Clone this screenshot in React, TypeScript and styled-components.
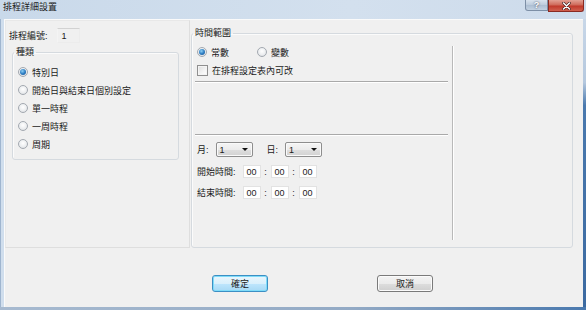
import React from "react";
import styled, { createGlobalStyle } from "styled-components";

const Global = createGlobalStyle`
  html, body { margin: 0; padding: 0; background: #f0f0f0; }
  body {
    font-family: "Liberation Sans", "Noto Sans CJK TC", sans-serif;
    font-size: 9px;
    color: #1b1b1b;
  }
  * { box-sizing: border-box; }
`;

const Window = styled.div`
  width: 586px;
  height: 310px;
  display: flex;
  flex-direction: column;
  background: #c9d8ea;
  overflow: hidden;
`;

const TitleBar = styled.div`
  height: 19px;
  flex: none;
  display: flex;
  align-items: flex-start;
  padding-left: 3px;
  background: linear-gradient(90deg, #c9d9ea 0%, #d3e0ee 60%, #cddbeb 100%);
`;

const TitleText = styled.div`
  flex: 1;
  padding-top: 2px;
  line-height: 11px;
  font-size: 9px;
  color: #202020;
`;

const CaptionButtons = styled.div`
  display: flex;
  margin-right: 2px;
`;

const CaptionButton = styled.div<{ $kind: "help" | "close" }>`
  width: ${(p) => (p.$kind === "close" ? 36 : 23)}px;
  height: ${(p) => (p.$kind === "close" ? 12 : 11)}px;
  display: flex;
  align-items: center;
  justify-content: center;
  border: 1px solid ${(p) => (p.$kind === "close" ? "#8a2a22" : "#7d8fa6")};
  border-top: none;
  border-radius: ${(p) => (p.$kind === "close" ? "0 0 3px 0" : "0 0 0 3px")};
  background: ${(p) =>
    p.$kind === "close"
      ? "linear-gradient(180deg, #e2a093 0%, #cf6a5a 45%, #c0392b 55%, #d0604f 100%)"
      : "linear-gradient(180deg, #d9e3ee 0%, #bccbdc 50%, #aebfd3 55%, #c3d2e2 100%)"};
  color: #fff;
  font-weight: bold;
  font-size: 9px;
  line-height: 9px;
  text-shadow: 0 0 2px #334;
`;

const Frame = styled.div`
  flex: 1;
  display: flex;
  min-height: 0;
`;

const LeftEdge = styled.div`
  width: 4px;
  flex: none;
  background: linear-gradient(90deg, #9fb5cf 0 1px, #d0deed 1px);
`;

const RightEdge = styled.div`
  width: 3px;
  flex: none;
  background: linear-gradient(180deg, #c8d7e8 0%, #b5c8de 22%, #4a79ae 30%, #3c6aa1 100%);
`;

const BottomEdge = styled.div`
  height: 3px;
  flex: none;
  background: linear-gradient(90deg, #a7bad0 0%, #93aac5 60%, #4a79ae 100%);
`;

const Client = styled.div`
  flex: 1;
  display: flex;
  flex-direction: column;
  background: #f0f0f0;
  border-top: 1px solid #fafafa;
  border-left: 1px solid #fafafa;
`;

const Main = styled.div`
  display: flex;
  height: 228px;
  align-items: stretch;
`;

const LeftPanel = styled.div`
  width: 185px;
  flex: none;
  display: flex;
  flex-direction: column;
  padding: 7px 0 0 3px;
  border: 1px solid #dedede;
  border-top-color: #e8e8e8;
  border-left-color: #e8e8e8;
`;

const Row = styled.div<{ $h: number; $mt?: number }>`
  display: flex;
  align-items: center;
  height: ${(p) => p.$h}px;
  margin-top: ${(p) => p.$mt ?? 0}px;
  white-space: nowrap;
`;

const IdLabel = styled.span`
  margin-right: 9px;
`;

const IdField = styled.div`
  width: 23px;
  height: 15px;
  padding-left: 4px;
  display: flex;
  align-items: center;
  border: 1px solid #ececec;
  border-top-color: #d2d2d2;
  border-left-color: #f4f4f4;
`;

const Group = styled.fieldset<{ $w: number }>`
  width: ${(p) => p.$w}px;
  margin: 0;
  min-width: 0;
  border: 1px solid #d5dadf;
  border-radius: 3px;
  box-shadow: inset 1px 1px 0 #fbfbfb;
`;

const KindGroup = styled(Group)`
  margin: 3px 0 0 3px;
  padding: 5px 4px 6px 5px;
  display: flex;
  flex-direction: column;
`;

const Legend = styled.legend<{ $ml: number }>`
  padding: 0 2px;
  margin-left: ${(p) => p.$ml}px;
  line-height: 12px;
  font-size: 9px;
`;

const TimeGroup = styled(Group)`
  margin: 7px 0 0 1px;
  padding: 6px 0 6px 3px;
  display: flex;
  align-items: stretch;
`;

const Option = styled.label<{ $ml?: number }>`
  display: flex;
  align-items: center;
  gap: 4px;
  margin-left: ${(p) => p.$ml ?? 0}px;
`;

const Radio = styled.span<{ $on?: boolean }>`
  width: 10px;
  height: 10px;
  flex: none;
  border-radius: 50%;
  border: 1px solid #a3a9b0;
  background: radial-gradient(circle at 50% 40%, #ffffff 0%, #eceef0 55%, #d6d9dc 100%);
  display: flex;
  align-items: center;
  justify-content: center;
  &::after {
    content: "";
    display: ${(p) => (p.$on ? "block" : "none")};
    width: 6px;
    height: 6px;
    border-radius: 50%;
    background: radial-gradient(circle at 40% 35%, #8fd0f5 0%, #2f7fc4 50%, #184f8e 100%);
  }
`;

const KindRow = styled(Row)`
  height: 18px;
`;

const CheckBox = styled.span`
  width: 11px;
  height: 11px;
  flex: none;
  border: 1px solid #8f8f8f;
  background: linear-gradient(135deg, #dcdcdc 0%, #f4f4f4 60%, #ffffff 100%);
  box-shadow: inset 0 0 0 1px #f4f4f4;
`;

const TimeColumn = styled.div`
  width: 253px;
  flex: none;
  display: flex;
  flex-direction: column;
`;

const Line = styled.div<{ $mt?: number }>`
  display: flex;
  align-items: center;
  padding-left: 2px;
  margin-top: ${(p) => p.$mt ?? 0}px;
  white-space: nowrap;
`;

const HSep = styled.div<{ $mt?: number }>`
  height: 2px;
  margin-top: ${(p) => p.$mt ?? 0}px;
  border-top: 1px solid #a9a9a9;
  border-bottom: 1px solid #ffffff;
`;

const Blank = styled.div<{ $h: number }>`
  height: ${(p) => p.$h}px;
`;

const VSep = styled.div`
  width: 2px;
  margin: 1px 0 1px 4px;
  border-left: 1px solid #b9b9b9;
  border-right: 1px solid #ffffff;
`;

const FieldLabel = styled.span<{ $mr: number; $ml?: number }>`
  margin-right: ${(p) => p.$mr}px;
  margin-left: ${(p) => p.$ml ?? 0}px;
`;

const Combo = styled.div`
  width: 37px;
  height: 15px;
  display: flex;
  align-items: center;
  justify-content: space-between;
  padding: 0 4px 0 3px;
  border: 1px solid #8e8e8e;
  border-radius: 2px;
  background: linear-gradient(180deg, #f5f5f5 0%, #ececec 50%, #dedede 52%, #d2d2d2 100%);
  box-shadow: inset 0 0 0 1px #fafafa;
`;

const Arrow = styled.span`
  width: 0;
  height: 0;
  border-left: 3px solid transparent;
  border-right: 3px solid transparent;
  border-top: 3px solid #111;
`;

const TimeBox = styled.div`
  width: 18px;
  height: 13px;
  display: flex;
  align-items: center;
  justify-content: center;
  background: #ffffff;
  border: 1px solid #e2e2e2;
`;

const TimeColon = styled.span`
  width: 10px;
  text-align: center;
`;

const TimeRow = styled(Line)`
  height: 13px;
`;

const ButtonRow = styled.div`
  display: flex;
  margin-top: 27px;
  padding-left: 207px;
  gap: 109px;
`;

const Button = styled.div<{ $primary?: boolean }>`
  width: 56px;
  height: 17px;
  display: flex;
  align-items: center;
  justify-content: center;
  border-radius: 3px;
  border: 1px solid ${(p) => (p.$primary ? "#3c8fc4" : "#7a7a7a")};
  background: ${(p) =>
    p.$primary
      ? "linear-gradient(180deg, #eaf6fd 0%, #d9f0fc 50%, #bee6fd 52%, #a7d9f5 100%)"
      : "linear-gradient(180deg, #f3f3f3 0%, #ebebeb 50%, #dddddd 52%, #cfcfcf 100%)"};
  box-shadow: ${(p) => (p.$primary ? "inset 0 0 0 1px #7fdcf9" : "inset 0 0 0 1px #fbfbfb")};
`;

const Spacer = styled.div`
  flex: 1;
`;

const kinds = ["特別日", "開始日與結束日個別設定", "單一時程", "一周時程", "周期"];

const TimeFields: React.FC<{ label: string; mt: number }> = ({ label, mt }) => (
  <TimeRow $mt={mt}>
    <FieldLabel $mr={7}>{label}:</FieldLabel>
    <TimeBox>00</TimeBox>
    <TimeColon>:</TimeColon>
    <TimeBox>00</TimeBox>
    <TimeColon>:</TimeColon>
    <TimeBox>00</TimeBox>
  </TimeRow>
);

export default function App() {
  return (
    <>
      <Global />
      <Window>
        <TitleBar>
          <TitleText>排程詳細設置</TitleText>
          <CaptionButtons>
            <CaptionButton $kind="help">?</CaptionButton>
            <CaptionButton $kind="close">
              <svg width="9" height="8" viewBox="0 0 9 8">
                <path d="M1.5 1 L7.5 7 M7.5 1 L1.5 7" stroke="#3a1a18" strokeWidth="2.6" strokeLinecap="round" />
                <path d="M1.5 1 L7.5 7 M7.5 1 L1.5 7" stroke="#ffffff" strokeWidth="1.5" strokeLinecap="round" />
              </svg>
            </CaptionButton>
          </CaptionButtons>
        </TitleBar>
        <Frame>
          <LeftEdge />
          <Client>
            <Main>
              <LeftPanel>
                <Row $h={15}>
                  <IdLabel>排程編號:</IdLabel>
                  <IdField>1</IdField>
                </Row>
                <KindGroup $w={167}>
                  <Legend $ml={-4}>種類</Legend>
                  {kinds.map((k, i) => (
                    <KindRow key={k} $h={18}>
                      <Option>
                        <Radio $on={i === 0} />
                        {k}
                      </Option>
                    </KindRow>
                  ))}
                </KindGroup>
              </LeftPanel>
              <TimeGroup $w={382}>
                <Legend $ml={-2}>時間範圍</Legend>
                <TimeColumn>
                  <Line style={{ height: 14 }}>
                    <Option>
                      <Radio $on />
                      常數
                    </Option>
                    <Option $ml={28}>
                      <Radio />
                      變數
                    </Option>
                  </Line>
                  <Line $mt={4} style={{ height: 14 }}>
                    <Option>
                      <CheckBox />
                      在排程設定表內可改
                    </Option>
                  </Line>
                  <HSep $mt={4} />
                  <Blank $h={51} />
                  <HSep />
                  <Line $mt={6} style={{ height: 15 }}>
                    <FieldLabel $mr={7}>月:</FieldLabel>
                    <Combo>
                      1<Arrow />
                    </Combo>
                    <FieldLabel $mr={7} $ml={14}>日:</FieldLabel>
                    <Combo>
                      1<Arrow />
                    </Combo>
                  </Line>
                  <TimeFields label="開始時間" mt={8} />
                  <TimeFields label="結束時間" mt={8} />
                </TimeColumn>
                <VSep />
              </TimeGroup>
            </Main>
            <ButtonRow>
              <Button $primary>確定</Button>
              <Button>取消</Button>
            </ButtonRow>
            <Spacer />
          </Client>
          <RightEdge />
        </Frame>
        <BottomEdge />
      </Window>
    </>
  );
}
